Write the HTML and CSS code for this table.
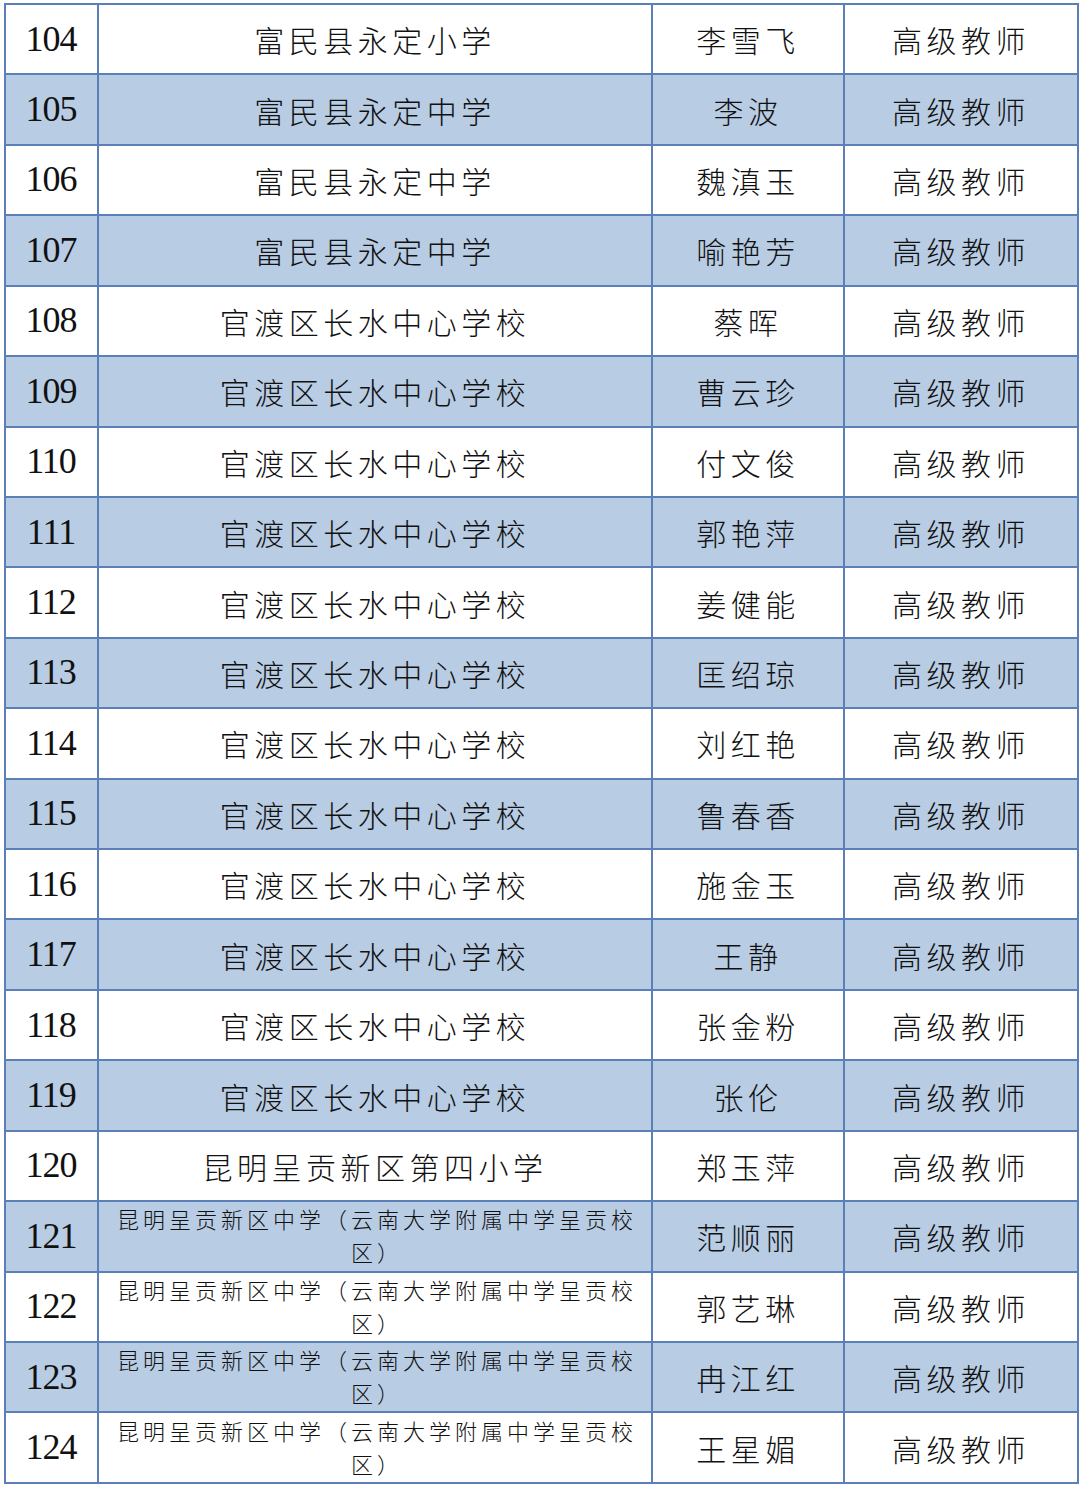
FILE: index.html
```html
<!DOCTYPE html>
<html lang="zh-CN">
<head>
<meta charset="utf-8">
<link rel="stylesheet" href="styles.css">
</head>
<body>
<table class="list">
<colgroup><col class="c-no"><col class="c-school"><col class="c-name"><col class="c-title"></colgroup>
<tbody>
<tr><td class="no">104</td><td class="school">富民县永定小学</td><td class="name">李雪飞</td><td class="title">高级教师</td></tr>
<tr class="alt"><td class="no">105</td><td class="school">富民县永定中学</td><td class="name">李波</td><td class="title">高级教师</td></tr>
<tr><td class="no">106</td><td class="school">富民县永定中学</td><td class="name">魏滇玉</td><td class="title">高级教师</td></tr>
<tr class="alt"><td class="no">107</td><td class="school">富民县永定中学</td><td class="name">喻艳芳</td><td class="title">高级教师</td></tr>
<tr><td class="no">108</td><td class="school">官渡区长水中心学校</td><td class="name">蔡晖</td><td class="title">高级教师</td></tr>
<tr class="alt"><td class="no">109</td><td class="school">官渡区长水中心学校</td><td class="name">曹云珍</td><td class="title">高级教师</td></tr>
<tr><td class="no">110</td><td class="school">官渡区长水中心学校</td><td class="name">付文俊</td><td class="title">高级教师</td></tr>
<tr class="alt"><td class="no">111</td><td class="school">官渡区长水中心学校</td><td class="name">郭艳萍</td><td class="title">高级教师</td></tr>
<tr><td class="no">112</td><td class="school">官渡区长水中心学校</td><td class="name">姜健能</td><td class="title">高级教师</td></tr>
<tr class="alt"><td class="no">113</td><td class="school">官渡区长水中心学校</td><td class="name">匡绍琼</td><td class="title">高级教师</td></tr>
<tr><td class="no">114</td><td class="school">官渡区长水中心学校</td><td class="name">刘红艳</td><td class="title">高级教师</td></tr>
<tr class="alt"><td class="no">115</td><td class="school">官渡区长水中心学校</td><td class="name">鲁春香</td><td class="title">高级教师</td></tr>
<tr><td class="no">116</td><td class="school">官渡区长水中心学校</td><td class="name">施金玉</td><td class="title">高级教师</td></tr>
<tr class="alt"><td class="no">117</td><td class="school">官渡区长水中心学校</td><td class="name">王静</td><td class="title">高级教师</td></tr>
<tr><td class="no">118</td><td class="school">官渡区长水中心学校</td><td class="name">张金粉</td><td class="title">高级教师</td></tr>
<tr class="alt"><td class="no">119</td><td class="school">官渡区长水中心学校</td><td class="name">张伦</td><td class="title">高级教师</td></tr>
<tr><td class="no">120</td><td class="school">昆明呈贡新区第四小学</td><td class="name">郑玉萍</td><td class="title">高级教师</td></tr>
<tr class="alt"><td class="no">121</td><td class="school small">昆明呈贡新区中学（云南大学附属中学呈贡校区）</td><td class="name">范顺丽</td><td class="title">高级教师</td></tr>
<tr><td class="no">122</td><td class="school small">昆明呈贡新区中学（云南大学附属中学呈贡校区）</td><td class="name">郭艺琳</td><td class="title">高级教师</td></tr>
<tr class="alt"><td class="no">123</td><td class="school small">昆明呈贡新区中学（云南大学附属中学呈贡校区）</td><td class="name">冉江红</td><td class="title">高级教师</td></tr>
<tr><td class="no">124</td><td class="school small">昆明呈贡新区中学（云南大学附属中学呈贡校区）</td><td class="name">王星媚</td><td class="title">高级教师</td></tr>
</tbody>
</table>
</body>
</html>
```
FILE: styles.css
```css
html, body {
  margin: 0;
  padding: 0;
  background: #ffffff;
}
body {
  padding: 3px 0 0 4px;
}
.list {
  border-collapse: collapse;
  table-layout: fixed;
  width: 1073px;
  color: #111;
  font-family: "Noto Sans CJK SC", "Noto Sans", sans-serif;
  font-weight: 300;
}
.c-no { width: 93px; }
.c-school { width: 554px; }
.c-name { width: 192px; }
.c-title { width: 234px; }
.list tr {
  height: 70.43px;
}
.list td {
  border: 2px solid #5b80b7;
  padding: 0;
  text-align: center;
  vertical-align: middle;
  font-size: 30px;
  letter-spacing: 4.5px;
  line-height: 1.2;
}
.list tr.alt td {
  background: #b8cce4;
}
.list td.no {
  font-family: "Liberation Serif", "Times New Roman", serif;
  font-weight: 400;
  font-size: 36px;
  letter-spacing: -1px;
  padding-right: 1px;
}
.list td.school.small {
  font-size: 22px;
  letter-spacing: 4px;
  line-height: 33px;
  padding: 0 10px 2px 14px;
}
```
